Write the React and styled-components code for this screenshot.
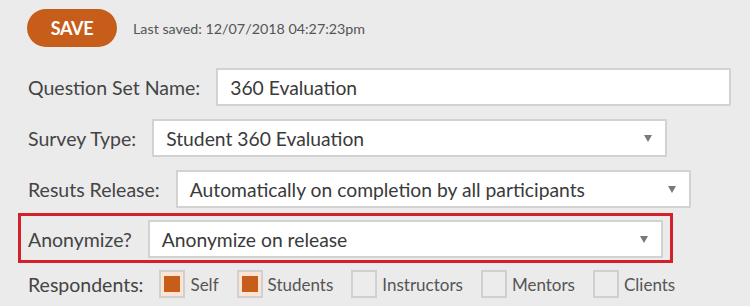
import React from "react";
import styled, { createGlobalStyle } from "styled-components";

const GlobalStyle = createGlobalStyle`
  body {
    margin: 0;
    background: #ebebeb;
    font-family: Lato, "Open Sans", sans-serif;
  }
`;

const Page = styled.div`
  width: 750px;
  height: 306px;
  padding: 9px 0 0 28px;
  box-sizing: border-box;
  display: flex;
  flex-direction: column;
  overflow: hidden;
`;

const SaveBar = styled.div`
  display: flex;
  align-items: center;
  gap: 16px;
  margin-left: -1px;
  margin-bottom: 21px;
`;

const SaveButton = styled.button`
  width: 90px;
  height: 38px;
  border: none;
  border-radius: 19px;
  background: #c65d1b;
  color: #fff;
  font-family: Lato, sans-serif;
  font-weight: 700;
  font-size: 18px;
  letter-spacing: -0.3px;
  padding: 0;
`;

const SavedNote = styled.span`
  font-size: 14.3px;
  color: #555;
`;

const Row = styled.div`
  display: flex;
  align-items: center;
  gap: 16px;
  margin-bottom: ${p => p.$gap || 13}px;
`;

const Highlight = styled(Row)`
  margin-left: -10px;
  width: 655px;
  box-sizing: border-box;
  border: 3px solid #d3202a;
  padding: 4px 6px 2px 7px;
  margin-top: -1px;
  margin-bottom: 7px;
`;

const Label = styled.span`
  font-size: 19.5px;
  color: #444;
  white-space: nowrap;
`;

const Field = styled.div`
  position: relative;
  width: 515px;
  height: 38px;
  box-sizing: border-box;
  background: #fff;
  border: 2px solid #d2d2d2;
  display: flex;
  align-items: center;
  padding: 0 0 0 12px;
  font-size: 19.3px;
  color: #3a3a3a;
`;

const Arrow = styled.span`
  position: absolute;
  right: 13px;
  top: 50%;
  margin-top: -3px;
  width: 0;
  height: 0;
  border-left: 4px solid transparent;
  border-right: 4px solid transparent;
  border-top: 7px solid #7a7a7a;
`;

const Checks = styled.div`
  display: flex;
  align-items: center;
  gap: 18px;
`;

const Check = styled.label`
  display: flex;
  align-items: center;
  gap: 5px;
  font-size: 17px;
  color: #555;
`;

const Box = styled.span`
  width: 26px;
  height: 28px;
  box-sizing: border-box;
  border: 2px solid #d0d0d0;
  background: ${p => (p.$on ? "#fbe4d4" : "#ececec")};
  padding: 4px 3px;
  display: flex;
  &::after {
    content: "";
    flex: 1;
    background: ${p => (p.$on ? "#c65d1b" : "transparent")};
  }
`;

const Select = ({ children }) => (
  <Field>
    {children}
    <Arrow />
  </Field>
);

const respondents = [
  { name: "Self", on: true },
  { name: "Students", on: true },
  { name: "Instructors" },
  { name: "Mentors" },
  { name: "Clients" },
];

export default function App() {
  return (
    <Page>
      <GlobalStyle />
      <SaveBar>
        <SaveButton>SAVE</SaveButton>
        <SavedNote>Last saved: 12/07/2018 04:27:23pm</SavedNote>
      </SaveBar>
      <Row>
        <Label>Question Set Name:</Label>
        <Field>360 Evaluation</Field>
      </Row>
      <Row>
        <Label>Survey Type:</Label>
        <Select>Student 360 Evaluation</Select>
      </Row>
      <Row $gap={6}>
        <Label>Resuts Release:</Label>
        <Select>Automatically on completion by all participants</Select>
      </Row>
      <Highlight>
        <Label>Anonymize?</Label>
        <Select>Anonymize on release</Select>
      </Highlight>
      <Row>
        <Label>Respondents:</Label>
        <Checks>
          {respondents.map(r => (
            <Check key={r.name}>
              <Box $on={r.on} />
              {r.name}
            </Check>
          ))}
        </Checks>
      </Row>
    </Page>
  );
}
